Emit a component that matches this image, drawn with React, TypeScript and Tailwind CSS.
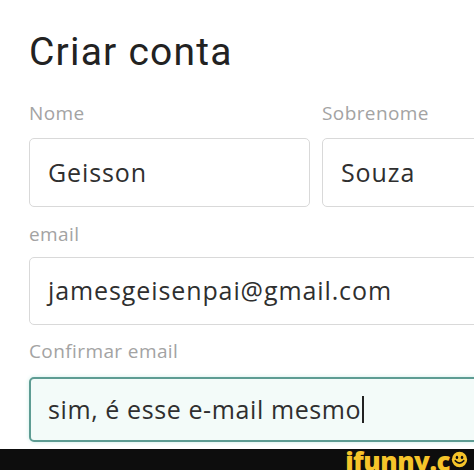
import React from 'react';

const labelCls = "text-[19px] leading-[20px] tracking-[0.4px] text-[#a3a3a3] font-['Open_Sans',sans-serif]";
const boxCls =
  "flex items-center rounded-[5px] border border-[#d9d9d9] bg-white pl-[18px] text-[25px] tracking-[0.9px] text-[#2f2f2f] font-['Open_Sans',sans-serif]";

function Smiley() {
  return (
    <svg width="17" height="17" viewBox="0 0 20 20" className="mb-[6px] ml-[1px]">
      <circle cx="10" cy="10" r="9" fill="#f6c42a" />
      <ellipse cx="7" cy="7.5" rx="1.5" ry="2" fill="#111" />
      <ellipse cx="13" cy="7.5" rx="1.5" ry="2" fill="#111" />
      <path d="M5 11.5 Q10 17 15 11.5" stroke="#111" strokeWidth="2" fill="none" strokeLinecap="round" />
    </svg>
  );
}

export default function App() {
  return (
    <div className="relative w-[474px] h-[470px] overflow-hidden bg-white">
      <div className="w-[600px] pl-[29px] pt-[30px]">
        <h1 className="text-[39px] leading-[44px] text-[#222] font-['Roboto',sans-serif] tracking-[1.2px]">
          Criar conta
        </h1>

        <div className="mt-[29px] grid grid-cols-[281px_281px] gap-x-[12px]">
          <div>
            <div className={labelCls}>Nome</div>
            <div className={`${boxCls} h-[69px] mt-[15px]`}>Geisson</div>
          </div>
          <div>
            <div className={labelCls}>Sobrenome</div>
            <div className={`${boxCls} h-[69px] mt-[15px]`}>Souza</div>
          </div>
        </div>

        <div className="mt-[17px]">
          <div className={labelCls}>email</div>
          <div className={`${boxCls} h-[68px] mt-[13px]`}>jamesgeisenpai@gmail.com</div>
        </div>

        <div className="mt-[16px]">
          <div className={labelCls}>Confirmar email</div>
          <div className="mt-[16px] flex items-center h-[65px] rounded-[5px] border-2 border-[#5e9c93] bg-[#f3fbf9] pl-[17px] text-[25px] tracking-[0.6px] text-[#2f2f2f] font-['Open_Sans',sans-serif] shadow-[0_0_4px_#cdeee8]">
            sim, é esse e-mail mesmo
            <span className="ml-[1px] inline-block w-[2px] h-[27px] bg-[#222]" />
          </div>
        </div>
      </div>

      <div className="absolute left-0 right-0 bottom-0 h-[21px] bg-[#0d0d0d] flex items-end justify-end pr-[6px]">
        <span className="flex items-end text-[#f6c42a] font-['Open_Sans',sans-serif] font-extrabold text-[26px] leading-[26px] tracking-[-0.5px] translate-y-[4px]">
          ifunny.c
          <Smiley />
        </span>
      </div>
    </div>
  );
}
